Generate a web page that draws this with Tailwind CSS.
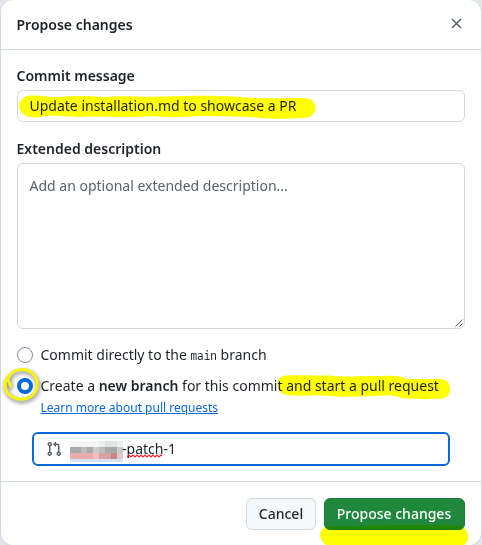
<!DOCTYPE html>
<html lang="en">
<head>
<meta charset="utf-8">
<title>Propose changes</title>
<script src="https://cdn.jsdelivr.net/npm/@tailwindcss/browser@4"></script>
</head>
<body class="h-[545px] w-[482px] overflow-hidden bg-[#e2e6ea] font-['Noto_Sans',sans-serif] text-sm leading-5 text-[#1f2328]">
<main class="relative flex h-[546px] w-[482px] flex-col rounded-[13px] border border-t-0 border-[#d1d9e0] bg-white">
  <header class="flex h-[50px] shrink-0 items-center justify-between border-b border-[#d1d9e0] pr-[18px] pl-[15.5px]">
    <h1 class="font-semibold">Propose changes</h1>
    <button aria-label="Close" class="mb-[2px]"><svg class="block size-[13px]" viewBox="0 0 13 13" fill="none" stroke="#59636e" stroke-width="1.6" stroke-linecap="round"><path d="M2.500 2.500l8 8M10.500 2.500l-8 8"/></svg></button>
  </header>
  <section class="flex h-[431px] shrink-0 flex-col px-4 pt-4">
    <label class="-ml-[0.5px] font-semibold">Commit message</label>
    <div class="mt-1 flex h-8 w-[448px] shrink-0 items-center rounded-md border border-[#d1d9e0] px-[11.5px]">Update installation.md to showcase a PR</div>
    <label class="mt-[17px] -ml-[0.5px] font-semibold">Extended description</label>
    <div class="relative mt-1 h-[166px] w-[448px] shrink-0 rounded-md border border-[#d1d9e0] px-[11.5px] pt-3 text-[#59636e]">Add an optional extended description...
      <svg class="absolute right-[1px] bottom-[1px] size-2" viewBox="0 0 8 8" stroke="#555" stroke-width="1"><path d="M0.500 7.500l7-7M4.500 7.500l3-3"/></svg>
    </div>
    <div class="mt-4 flex h-5 shrink-0 items-center gap-[7.5px]">
      <span class="size-4 shrink-0 rounded-full border border-[#818b98]"></span>
      <p>Commit directly to the <code class="inline-block origin-bottom scale-y-110 font-['Noto_Sans_Mono','DejaVu_Sans_Mono',monospace] text-[11px] leading-4">main</code> branch</p>
    </div>
    <div class="mt-[11px] flex h-5 shrink-0 items-center gap-[7.5px]">
      <span class="size-4 shrink-0 rounded-full border-4 border-[#0969da] bg-white"></span>
      <p>Create a <b class="font-semibold">new branch</b> for this commit and start a pull request</p>
    </div>
    <a class="mt-[3px] ml-[23.5px] self-start text-xs leading-[18px] text-[#0969da] underline">Learn more about pull requests</a>
    <div class="mt-[15px] ml-[15px] flex h-[34px] w-[418px] shrink-0 items-center rounded-md border-2 border-[#0969da] pl-3">
      <svg class="size-4 shrink-0" viewBox="0 0 16 16" fill="#59636e"><path d="M1.5 3.25a2.25 2.25 0 1 1 3 2.122v5.256a2.251 2.251 0 1 1-1.5 0V5.372A2.25 2.25 0 0 1 1.5 3.25Zm5.677-.177L9.573.677A.25.25 0 0 1 10 .854V2.5h1A2.5 2.5 0 0 1 13.5 5v5.628a2.251 2.251 0 1 1-1.5 0V5a1 1 0 0 0-1-1h-1v1.646a.25.25 0 0 1-.427.177L7.177 3.427a.25.25 0 0 1 0-.354ZM3.75 2.5a.75.75 0 1 0 0 1.5.75.75 0 0 0 0-1.5Zm0 9.5a.75.75 0 1 0 0 1.5.75.75 0 0 0 0-1.5Zm8.25.75a.75.75 0 1 0 1.5 0 .75.75 0 0 0-1.5 0Z"/></svg>
      <svg class="mt-[5px] ml-2 h-[21px] w-[53px] shrink-0" viewBox="0 0 53 21" shape-rendering="crispEdges">
        <path fill="#f6f6f6" d="M0 0h53v6H0z"/><path fill="#eceeee" d="M29 0h6v6h-6zM47 0h6v6h-6z"/><path fill="#e1e4e5" d="M35 0h12v6H35z"/>
        <path fill="#cbcbcb" d="M0 6h53v6H0z"/><path fill="#aaa" d="M0 6h11v6H0zM17 6h6v6h-6zM35 6h12v6H35z"/><path fill="#bcbcbc" d="M11 6h6v6h-6zM29 6h6v6h-6z"/>
        <path fill="#e9afb0" d="M0 12h53v6H0z"/><path fill="#f5babb" d="M23 12h6v6h-6z"/><path fill="#d5a5a6" d="M29 12h6v6h-6zM35 12h6v6h-6z"/><path fill="#c58788" d="M41 12h6v6h-6z"/><path fill="#dfc9ca" d="M47 12h6v6h-6z"/>
        <path fill="#d6e3f5" d="M0 18h53v3H0z"/>
      </svg>
      <span class="-ml-px">-<span class="relative">patch<svg class="absolute top-[15px] left-0 h-[4px] w-[37px]" viewBox="0 0 37 4" fill="none" stroke="#f22" stroke-width="1.1"><path d="M0 3l2-2 2 2 2-2 2 2 2-2 2 2 2-2 2 2 2-2 2 2 2-2 2 2 2-2 2 2 2-2 2 2 2-2 1 1"/></svg></span>-1</span>
    </div>
  </section>
  <footer class="flex h-[65px] shrink-0 items-start justify-end gap-2 border-t border-[#d1d9e0] pt-4 pr-4">
    <button class="h-8 w-[70px] rounded-md border border-[#d1d9e0] bg-[#f6f8fa] font-medium text-[#25292e]">Cancel</button>
    <button class="h-8 w-[141px] rounded-md border border-[#1f7a37] bg-[#1f883d] pr-px font-medium text-white shadow-xs">Propose changes</button>
  </footer>
</main>
<svg class="pointer-events-none absolute top-0 left-0 h-[545px] w-[482px] mix-blend-multiply" viewBox="0 0 482 545" fill="#ff0">
  <path d="M30 95.500C42 95 48 97.500 56 97C72 95.500 88 95.500 106 97C122 95 142 97.500 162 96.500C192 95.500 225 95.500 240 97C258 99 280 98 304 98C312 98 315.500 103 315.500 108C315.500 114 311 117.500 304 118C287 118.500 273 119.500 260 118C242 115.500 218 117 198 116C180 117.500 166 117.500 153 116C134 117.500 110 117 88 116.500C72 118 58 114.500 46 116C36 118.500 26 118 21 112C17 105 20 97 30 95.500Z"/>
  <path d="M286 375.500C300 374.500 316 376 330 375.500C344 377.500 362 375.500 378 376C394 375 402 376 407 379H440C447 379 450 383 450 389C450 396 445 399 438 399C431 398 428 400 422 399C412 398 403 400 396 396C380 394.500 365 397 350 396.500C338 398 326 394.500 312 395.500C303 396 293 395.500 287 395C280 394 277.500 390 277.500 385C277.500 380 280 376 286 375.500Z"/>
  <path d="M330 526C343 526 350 527 360 526C385 524.500 435 525 460 525.500C467 528 468.500 534 468 539C467 543 465 545 463 545H326C321 541 319 536 320.500 532Q323 526 330 526Z"/>
</svg>
<svg class="pointer-events-none absolute top-[364px] left-0 h-10 w-11 drop-shadow-[1px_2px_2px_rgba(0,0,0,0.55)]" viewBox="0 0 44 40" fill="none" stroke="#f8f500" stroke-width="3" stroke-linecap="round" stroke-linejoin="round"><path d="M10.500 22L9 18C7 14 8 15 10 11C15 4 27 4 33 10C40 17 38 28 30 33C21 38 9 34 6 26C4 20 6 15 9 12"/></svg>
</body>
</html>
